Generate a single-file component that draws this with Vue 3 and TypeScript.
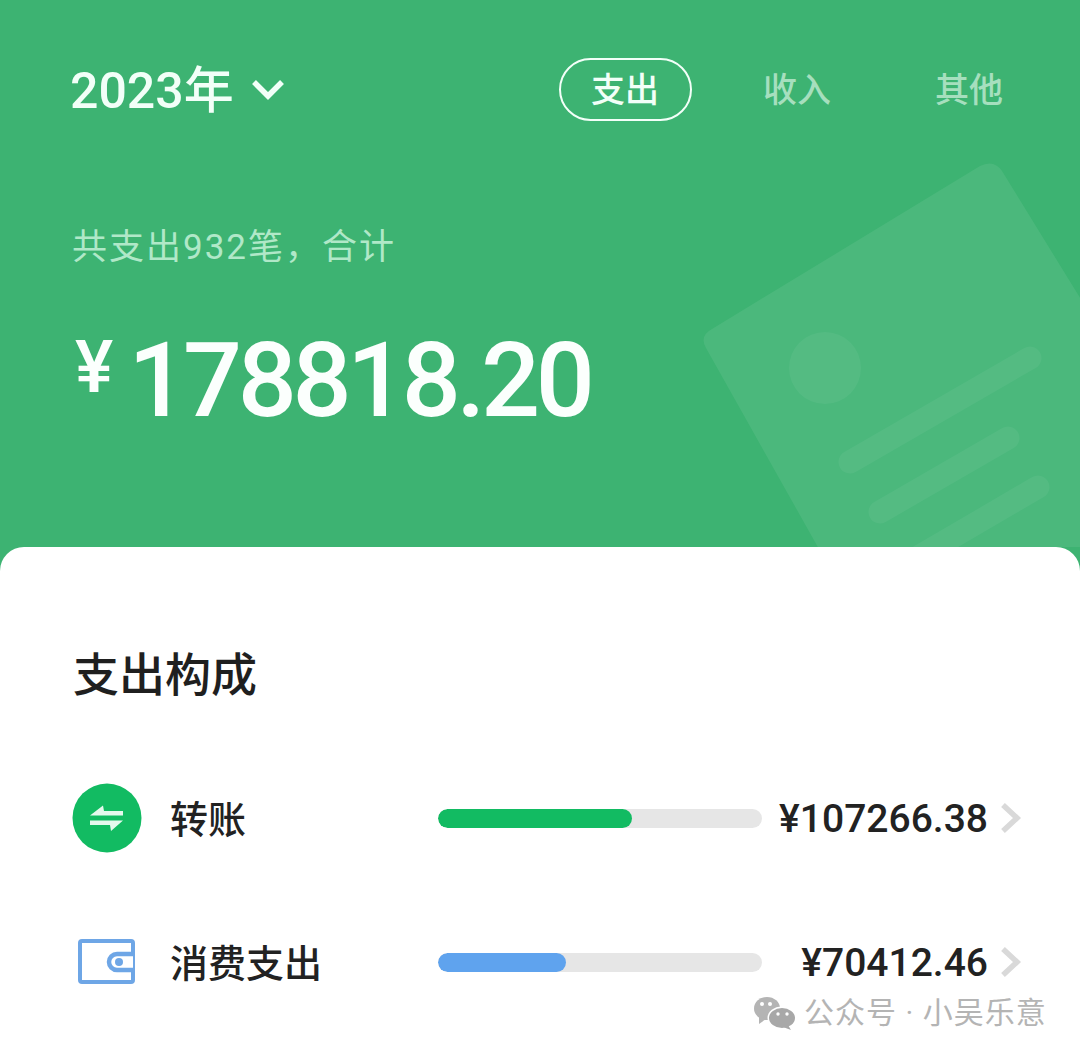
<script setup lang="ts">
interface Row { name: string; amount: string; pct: number; color: string; kind: 'transfer' | 'wallet' }
const tabs = [
  { label: '支出', active: true },
  { label: '收入', active: false },
  { label: '其他', active: false },
]
const rows: Row[] = [
  { name: '转账', amount: '¥107266.38', pct: 60, color: '#12bb62', kind: 'transfer' },
  { name: '消费支出', amount: '¥70412.46', pct: 39.4, color: '#5fa3ee', kind: 'wallet' },
]
</script>

<template>
  <div class="page">
    <header class="hero">
      <svg class="decor" viewBox="0 0 1080 547" width="1080" height="547" aria-hidden="true">
        <path d="M980 166 Q994 159 1002 171 L1240 558 L842 590 L706 348 Q699 336 712 329 Z" fill="#fff" fill-opacity="0.075" />
        <circle cx="825" cy="368" r="36" fill="#fff" fill-opacity="0.05" />
        <g stroke="#fff" stroke-opacity="0.05" stroke-width="23" stroke-linecap="round">
          <line x1="850" y1="462" x2="1030" y2="358" />
          <line x1="880" y1="512" x2="1008" y2="438" />
          <line x1="920" y1="556" x2="1038" y2="487" />
        </g>
      </svg>
      <div class="topbar">
        <div class="year">
          <span class="year-text">2023年</span>
          <svg class="caret" viewBox="0 0 34 22" width="34" height="22"><path d="M3 4 L17 18 L31 4" fill="none" stroke="#f2fff8" stroke-width="5.5" /></svg>
        </div>
        <nav class="tabs">
          <span v-for="t in tabs" :key="t.label" class="tab" :class="{ active: t.active }">{{ t.label }}</span>
        </nav>
      </div>
      <p class="summary">共支出932笔，合计</p>
      <div class="total"><span class="yen">¥</span><span class="num">178818.20</span></div>
    </header>
    <main class="card">
      <h2 class="title">支出构成</h2>
      <div v-for="r in rows" :key="r.name" class="row">
        <div class="icon">
          <svg v-if="r.kind === 'transfer'" viewBox="0 0 70 70" width="70" height="70">
            <circle cx="35" cy="35" r="34.5" fill="#12bb62" />
            <path d="M18 32.5 L31 22.5 L32 28 H51 V32.5 Z M51 37.5 L39 48 L38 42 H18 V37.5 Z" fill="#e4f9ed" />
          </svg>
          <svg v-else viewBox="0 0 70 70" width="70" height="70">
            <rect x="8" y="14" width="53" height="41" rx="2" fill="#fff" stroke="#6ea6e6" stroke-width="4" />
            <path d="M61 27 H45 a8 8 0 0 0 0 16 H61" fill="#fff" stroke="#6ea6e6" stroke-width="4.5" />
            <circle cx="47" cy="35" r="4" fill="#6ea6e6" />
          </svg>
        </div>
        <span class="name">{{ r.name }}</span>
        <div class="track"><div class="fill" :style="{ width: r.pct + '%', background: r.color }"></div></div>
        <span class="amount">{{ r.amount }}</span>
        <svg class="chev" viewBox="0 0 22 32" width="22" height="32"><path d="M3 3 L17 16 L3 29" fill="none" stroke="#d9d9d9" stroke-width="5.5" /></svg>
      </div>
    </main>
    <div class="mark">
      <svg viewBox="0 0 42 34" width="42" height="34">
        <ellipse cx="13" cy="12.5" rx="13" ry="11.5" fill="#b4b4b4" />
        <path d="M5 20 L5 28 L12 23 Z" fill="#b4b4b4" />
        <ellipse cx="28" cy="22" rx="14.5" ry="11.5" fill="#fff" />
        <ellipse cx="28" cy="22" rx="13" ry="10" fill="#a8a8a8" />
        <path d="M34 29 L37 34 L29 31 Z" fill="#a8a8a8" />
        <circle cx="8" cy="8" r="2" fill="#fff" /><circle cx="16" cy="8" r="2" fill="#fff" />
        <circle cx="24" cy="18" r="1.7" fill="#fff" /><circle cx="33" cy="18" r="1.7" fill="#fff" />
      </svg>
      <span>公众号 · 小吴乐意</span>
    </div>
  </div>
</template>

<style>
html, body { margin: 0; background: #fff; }
</style>

<style scoped>
.page {
  position: relative;
  width: 1080px;
  height: 1056px;
  background: #3db372;
  display: flex;
  flex-direction: column;
  overflow: hidden;
  font-family: Roboto, "Noto Sans CJK SC", sans-serif;
}
.hero {
  position: relative;
  height: 547px;
  flex: none;
  box-sizing: border-box;
  padding: 58px 25px 0 70px;
  color: #fff;
}
.decor { position: absolute; left: 0; top: 0; }
.topbar { position: relative; display: flex; justify-content: space-between; align-items: center; height: 62px; }
.year { display: flex; align-items: center; gap: 17px; font-size: 50px; font-weight: 500; color: #f2fff8; }
.year-text { line-height: 58px; padding-top: 3px; }
.tabs { display: grid; grid-template-columns: repeat(3, 172px); justify-items: center; align-items: center; }
.tab { font-size: 34px; font-weight: 500; color: #a6dfbe; line-height: 62px; padding-top: 2px; }
.tab.active {
  box-sizing: border-box;
  width: 133px;
  height: 63px;
  padding-top: 0;
  line-height: 60px;
  text-align: center;
  border: 2.5px solid #f2fff8;
  border-radius: 32px;
  color: #f2fff8;
}
.summary { position: relative; margin: 105px 0 0 2px; font-size: 35px; line-height: 46px; letter-spacing: 2px; color: #b0e8c8; }
.total { position: relative; display: flex; align-items: flex-start; margin-top: 49px; color: #fbfffd; }
.yen { font-size: 72px; font-weight: 500; line-height: 60px; margin: 18px 15px 0 5px; }
.num { font-size: 104px; line-height: 122px; font-weight: 500; letter-spacing: -4.4px; }
.card {
  flex: 1;
  background: #fff;
  border-radius: 24px 24px 0 0;
  padding: 98px 58px 0 72px;
}
.title { margin: 0 0 78px; font-size: 46px; line-height: 60px; font-weight: 500; color: #1f1f1f; padding-left: 1px; }
.row { display: flex; align-items: center; height: 70px; margin-bottom: 74px; color: #222; }
.icon { width: 70px; height: 70px; flex: none; }
.icon svg { display: block; }
.name { width: 268px; flex: none; margin-left: 28px; font-size: 38px; font-weight: 500; color: #222; padding-bottom: 4px; }
.track { width: 324px; height: 19px; flex: none; background: #e6e6e6; border-radius: 10px; overflow: hidden; }
.fill { height: 100%; border-radius: 10px; }
.amount { flex: 1; text-align: right; font-size: 39px; font-weight: 500; color: #222; padding-top: 2px; }
.chev { flex: none; margin-left: 12px; }
.mark {
  position: absolute;
  left: 754px;
  top: 996px;
  display: flex;
  align-items: center;
  gap: 8px;
  font-size: 30px;
  letter-spacing: 1px;
  line-height: 34px;
  color: #b4b4b4;
}
.mark svg { flex: none; }
</style>
